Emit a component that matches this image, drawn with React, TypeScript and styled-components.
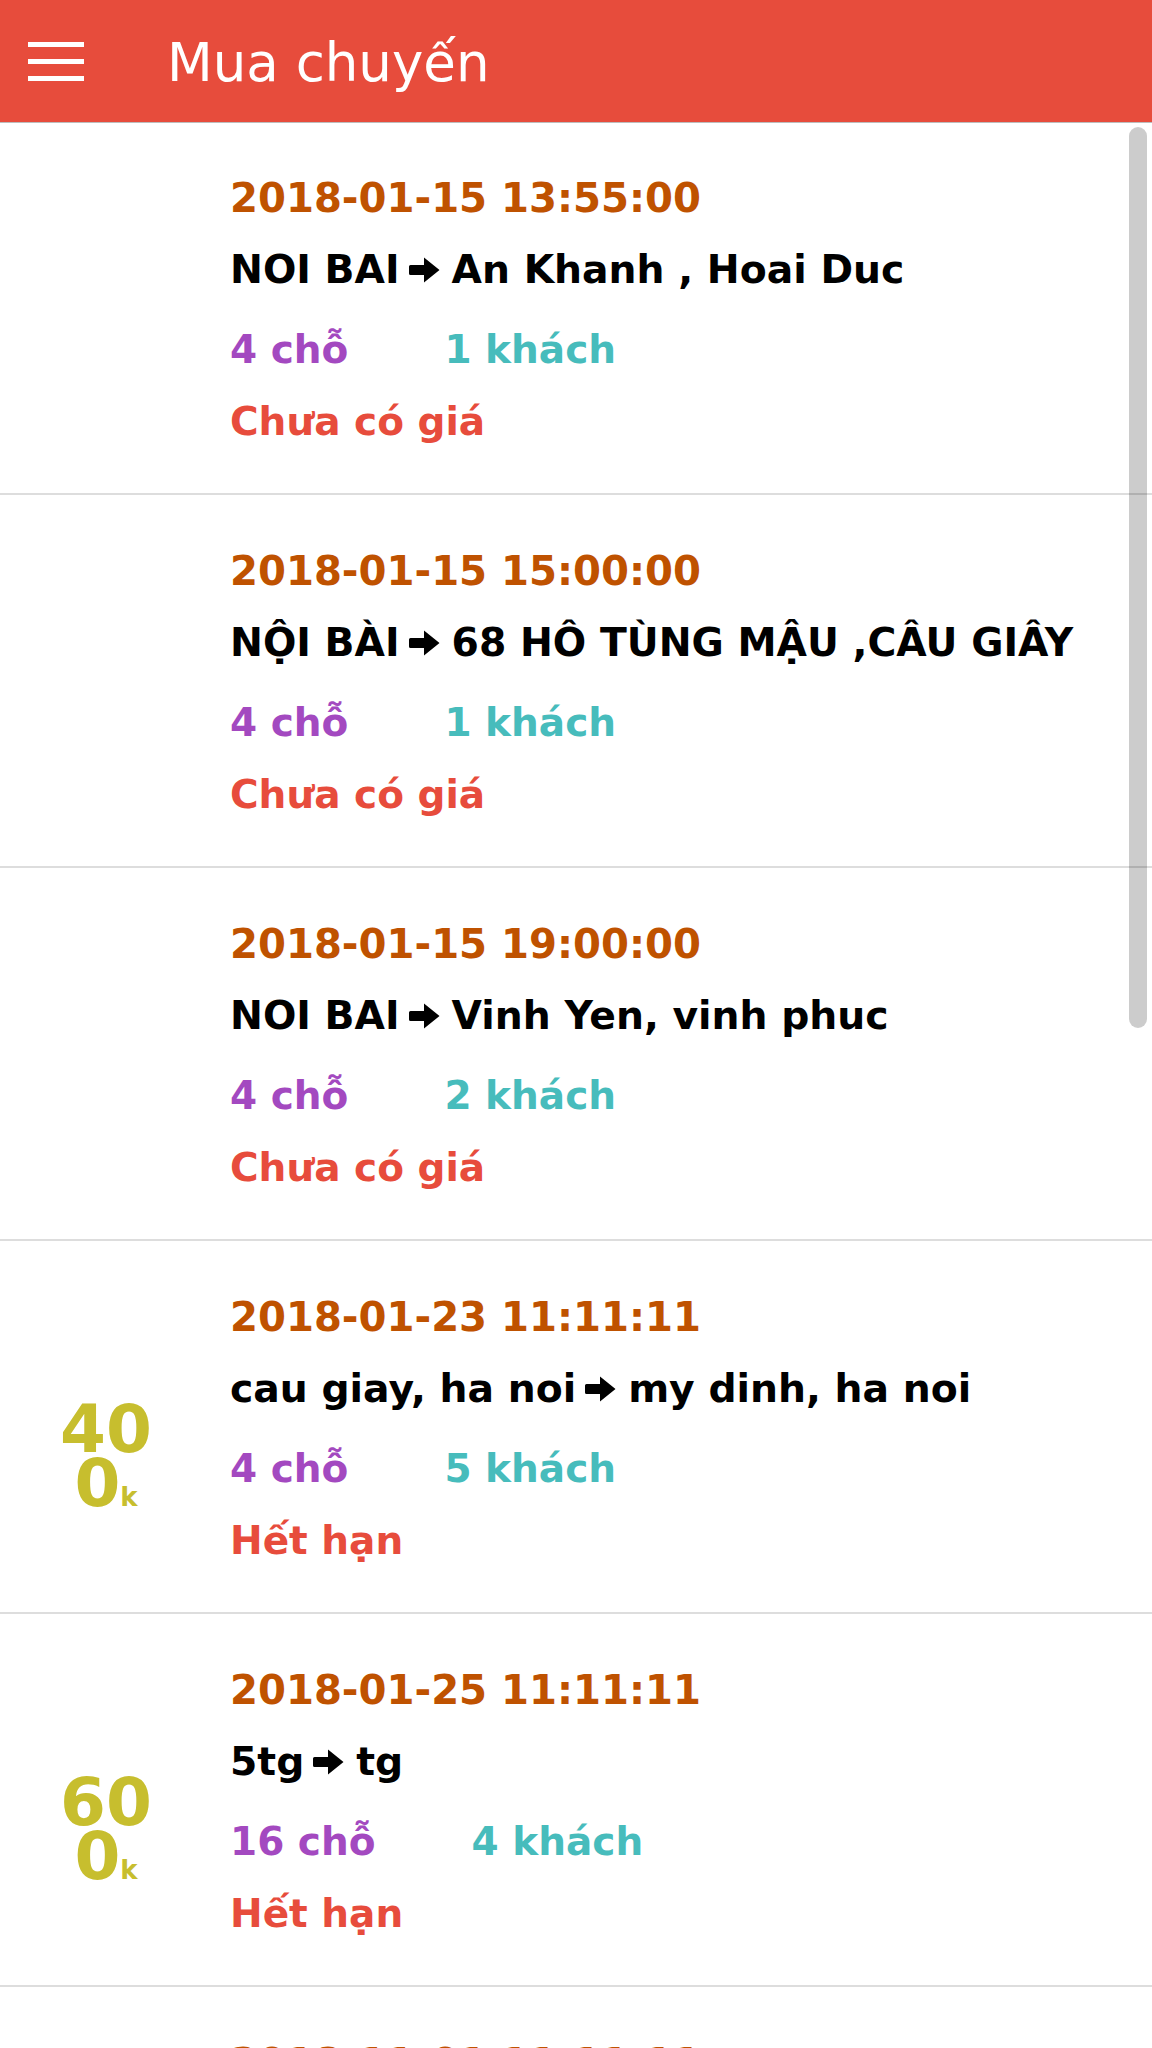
import React from "react";
import styled, { createGlobalStyle } from "styled-components";

const GlobalStyle = createGlobalStyle`
  html, body {
    margin: 0;
    padding: 0;
    background: #ffffff;
    font-family: "DejaVu Sans", "Noto Sans", sans-serif;
  }
  * { box-sizing: border-box; }
`;

const Page = styled.div`
  width: 100%;
  min-height: 2048px;
  background: #ffffff;
  overflow: hidden;
`;

const Header = styled.header`
  position: relative;
  z-index: 2;
  height: 122px;
  background: #e74c3c;
  display: flex;
  align-items: center;
  padding-left: 28px;
  box-shadow: 0 1px 0 #bdbdbd;
`;

const MenuButton = styled.div`
  width: 56px;
  display: flex;
  flex-direction: column;
  gap: 12px;
  margin-right: 83px;
`;

const MenuBar = styled.span`
  display: block;
  height: 5px;
  background: #ffffff;
`;

const Title = styled.h1`
  margin: 0;
  padding-top: 2px;
  font-family: "DejaVu Sans", sans-serif;
  font-weight: normal;
  font-size: 53px;
  color: #ffffff;
  white-space: nowrap;
`;

const List = styled.main`
  display: flex;
  flex-direction: column;
`;

const Item = styled.section`
  display: flex;
  border-bottom: 2.6px solid #dddddd;
`;

const PriceCol = styled.div`
  flex: none;
  width: 212px;
  margin-right: 18px;
  align-self: center;
  padding: 60px 56px 0;
  text-align: center;
  font-weight: bold;
  font-size: 66px;
  line-height: 54px;
  color: #c7be2e;
  word-break: break-all;
`;

const PriceUnit = styled.span`
  font-size: 26px;
  line-height: 0;
`;

const Info = styled.div`
  flex: 1;
  min-width: 0;
  padding: 40px 0 35px;
  font-weight: bold;
  white-space: nowrap;
`;

const DateLine = styled.div`
  font-size: 40.2px;
  line-height: 72px;
  color: #bf5200;
`;

const Route = styled.div`
  font-size: 39.3px;
  line-height: 72px;
  margin-bottom: 8px;
  color: #000000;
`;

const ArrowIcon = styled.svg`
  width: 31px;
  height: 26px;
  margin: 0 12px 0 9px;
  vertical-align: baseline;
`;

const Stats = styled.div`
  font-size: 39px;
  line-height: 72px;
`;

const Seats = styled.span`
  color: #a349c0;
  margin-right: 96px;
`;

const Guests = styled.span`
  color: #47bcbc;
`;

const Status = styled.div`
  font-size: 39px;
  line-height: 72px;
  color: #e74c3c;
`;

const ScrollThumb = styled.div`
  position: fixed;
  top: 127px;
  right: 5px;
  width: 18px;
  height: 901px;
  border-radius: 9px;
  background: rgba(0, 0, 0, 0.2);
  z-index: 3;
`;

type Trip = {
  date: string;
  from: string;
  to: string;
  seats: number;
  guests: number;
  status: string;
  price?: string;
};

const trips: Trip[] = [
  { date: "2018-01-15 13:55:00", from: "NOI BAI", to: "An Khanh , Hoai Duc", seats: 4, guests: 1, status: "Chưa có giá" },
  { date: "2018-01-15 15:00:00", from: "NỘI BÀI", to: "68 HÔ TÙNG MẬU ,CÂU GIÂY", seats: 4, guests: 1, status: "Chưa có giá" },
  { date: "2018-01-15 19:00:00", from: "NOI BAI", to: "Vinh Yen, vinh phuc", seats: 4, guests: 2, status: "Chưa có giá" },
  { date: "2018-01-23 11:11:11", from: "cau giay, ha noi", to: "my dinh, ha noi", seats: 4, guests: 5, status: "Hết hạn", price: "400" },
  { date: "2018-01-25 11:11:11", from: "5tg", to: "tg", seats: 16, guests: 4, status: "Hết hạn", price: "600" },
  { date: "2018-11-01 11:11:11", from: "my dinh", to: "noi bai", seats: 4, guests: 1, status: "Hết hạn", price: "300" },
];

const Arrow = () => (
  <ArrowIcon viewBox="0 0 31 26" aria-hidden="true">
    <path d="M1.5 8 H15 V0.5 L30.5 13 L15 25.5 V18 H1.5 Q0 18 0 16.5 V9.5 Q0 8 1.5 8 Z" fill="#000" />
  </ArrowIcon>
);

export default function App() {
  return (
    <Page>
      <GlobalStyle />
      <Header>
        <MenuButton>
          <MenuBar />
          <MenuBar />
          <MenuBar />
        </MenuButton>
        <Title>Mua chuyến</Title>
      </Header>
      <List>
        {trips.map((t, i) => (
          <Item key={i}>
            <PriceCol>
              {t.price && (
                <>
                  {t.price}
                  <PriceUnit>k</PriceUnit>
                </>
              )}
            </PriceCol>
            <Info>
              <DateLine>{t.date}</DateLine>
              <Route>
                {t.from}
                <Arrow />
                {t.to}
              </Route>
              <Stats>
                <Seats>{t.seats} chỗ</Seats>
                <Guests>{t.guests} khách</Guests>
              </Stats>
              <Status>{t.status}</Status>
            </Info>
          </Item>
        ))}
      </List>
      <ScrollThumb />
    </Page>
  );
}
